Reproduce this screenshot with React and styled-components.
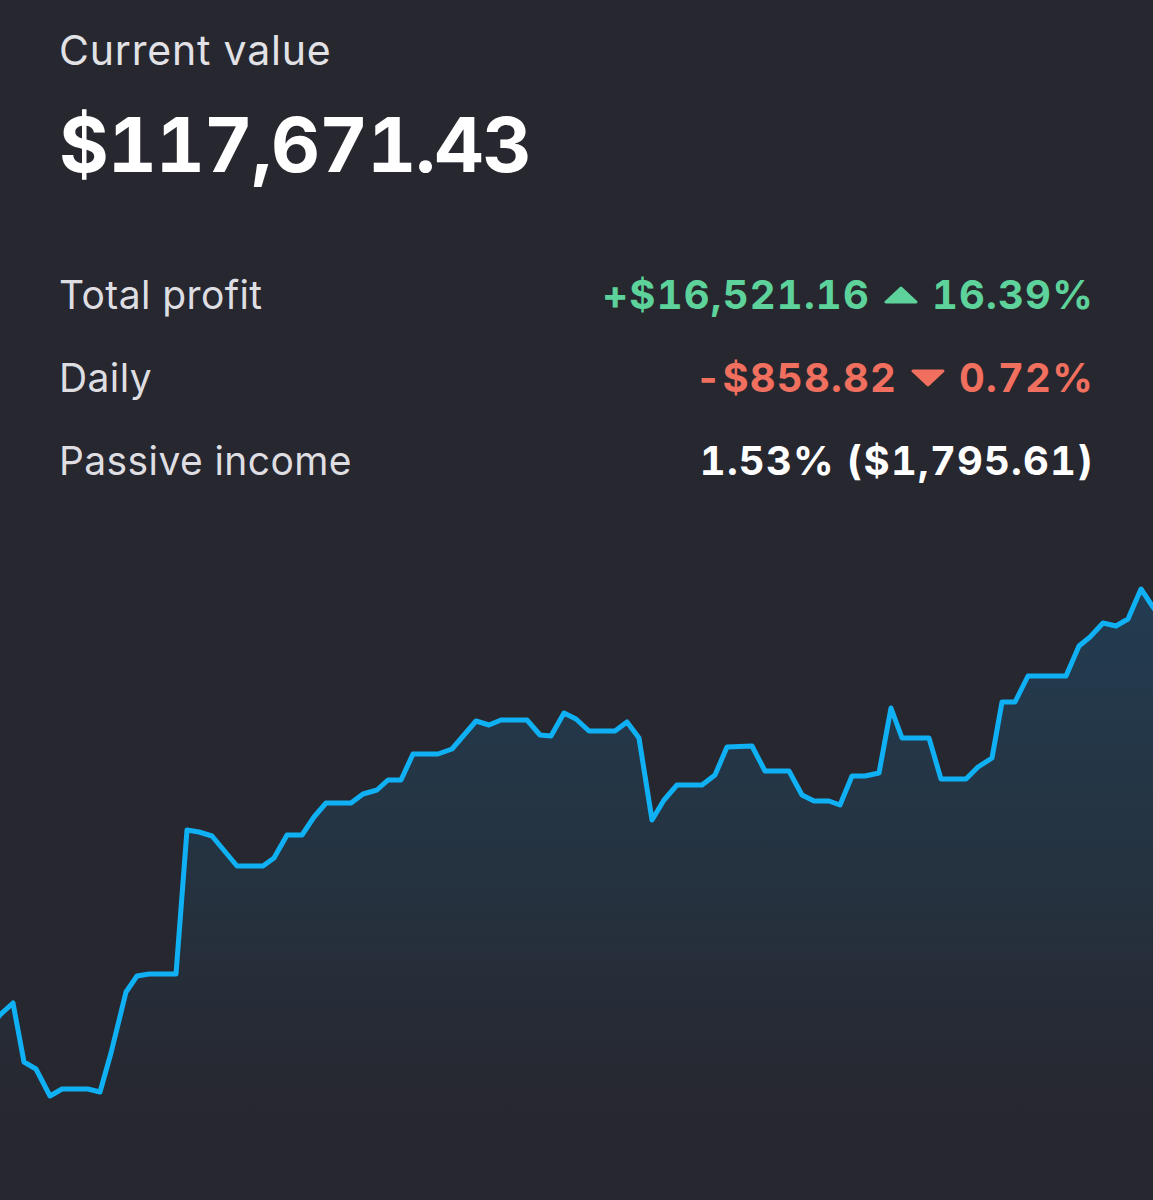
import React from 'react';
import styled, { createGlobalStyle } from 'styled-components';

const GlobalStyle = createGlobalStyle`
  html, body {
    margin: 0;
    padding: 0;
    background: #27272f;
  }
  body {
    font-family: Inter, "Noto Sans", "Liberation Sans", sans-serif;
    -webkit-font-smoothing: antialiased;
  }
`;

const Screen = styled.div`
  width: 1153px;
  height: 1200px;
  background: #27272f;
  overflow: hidden;
  display: flex;
  flex-direction: column;
`;

const Summary = styled.section`
  padding: 26px 59px 0 59px;
  display: flex;
  flex-direction: column;
`;

const Caption = styled.div`
  font-size: 41px;
  line-height: 48px;
  color: #e2e2e6;
  font-weight: 400;
  letter-spacing: 0.8px;
`;

const Total = styled.div`
  margin-top: 32px;
  font-size: 76px;
  line-height: 76px;
  font-weight: 700;
  color: #ffffff;
  font-variant-numeric: tabular-nums;
  letter-spacing: -1.1px;
`;

const Stats = styled.div`
  margin-top: 71px;
  display: flex;
  flex-direction: column;
`;

const Row = styled.div`
  display: flex;
  justify-content: space-between;
  align-items: center;
  height: 83px;
  font-size: 39px;
`;

const Label = styled.span`
  color: #dedee2;
  font-weight: 400;
  letter-spacing: 0.4px;
`;

const Value = styled.span`
  display: flex;
  align-items: center;
  gap: 13px;
  font-weight: 700;
  font-size: 40px;
  font-variant-numeric: tabular-nums;
  letter-spacing: 1.2px;
  color: ${p => p.color || '#ffffff'};
`;

const ChartWrap = styled.div`
  margin-top: 58px;
  flex: 1;
  display: flex;
`;

const Arrow = ({ down, color }) => (
  <svg width="36" height="18" viewBox="0 0 36 18">
    <path
      d={down ? 'M3 2 L33 2 L18 16 Z' : 'M3 16 L33 16 L18 2 Z'}
      fill={color}
      stroke={color}
      strokeWidth="3"
      strokeLinejoin="round"
    />
  </svg>
);

// sampled from the portfolio curve, page coords (y offset by chart top = 560)
const points = [
  [-4, 1020], [0, 1015], [13, 1003], [24, 1062], [36, 1069], [50, 1096], [62, 1089],
  [88, 1089], [100, 1092], [111, 1053], [126, 992], [137, 976], [149, 974],
  [176, 974], [187, 830], [199, 832], [212, 836], [237, 866], [263, 866],
  [274, 858], [287, 835], [302, 835], [314, 817], [326, 803], [351, 803],
  [363, 794], [377, 790], [388, 780], [401, 780], [413, 754], [438, 754],
  [452, 749], [476, 721], [489, 725], [501, 720], [527, 720], [540, 735],
  [551, 736], [564, 713], [576, 719], [589, 731], [615, 731], [627, 722],
  [639, 738], [652, 820], [664, 800], [677, 785], [702, 785], [715, 775],
  [727, 747], [752, 746], [765, 771], [789, 771], [802, 795], [814, 801],
  [829, 801], [840, 805], [852, 776], [865, 776], [879, 773], [891, 708],
  [902, 738], [929, 738], [941, 779], [966, 779], [978, 767], [992, 758],
  [1002, 702], [1015, 702], [1028, 676], [1066, 676], [1079, 646], [1090, 637],
  [1103, 623], [1116, 626], [1128, 619], [1141, 589], [1153, 607], [1160, 617]
];

function Chart() {
  const top = 560;
  const line = points.map(([x, y]) => `${x},${y - top}`).join(' ');
  const area = `M-4,640 L${line.split(' ').join(' L')} L1160,640 Z`;
  return (
    <svg width="1153" height="640" viewBox="0 0 1153 640">
      <defs>
        <linearGradient id="fade" x1="0" y1="29" x2="0" y2="560" gradientUnits="userSpaceOnUse">
          <stop offset="0" stopColor="#233c51" />
          <stop offset="0.55" stopColor="#25323f" />
          <stop offset="1" stopColor="#27272f" />
        </linearGradient>
      </defs>
      <path d={area} fill="url(#fade)" />
      <polyline
        points={line}
        fill="none"
        stroke="#10b1f4"
        strokeWidth="5"
        strokeLinejoin="round"
        strokeLinecap="round"
      />
    </svg>
  );
}

export default function App() {
  const green = '#5dd29a';
  const red = '#f06f5e';
  return (
    <Screen>
      <GlobalStyle />
      <Summary>
        <Caption>Current value</Caption>
        <Total>$117,671.43</Total>
        <Stats>
          <Row>
            <Label>Total profit</Label>
            <Value color={green}>
              +$16,521.16 <Arrow color={green} /> 16.39%
            </Value>
          </Row>
          <Row>
            <Label>Daily</Label>
            <Value color={red}>
              -$858.82 <Arrow down color={red} /> 0.72%
            </Value>
          </Row>
          <Row>
            <Label>Passive income</Label>
            <Value>1.53% ($1,795.61)</Value>
          </Row>
        </Stats>
      </Summary>
      <ChartWrap>
        <Chart />
      </ChartWrap>
    </Screen>
  );
}
